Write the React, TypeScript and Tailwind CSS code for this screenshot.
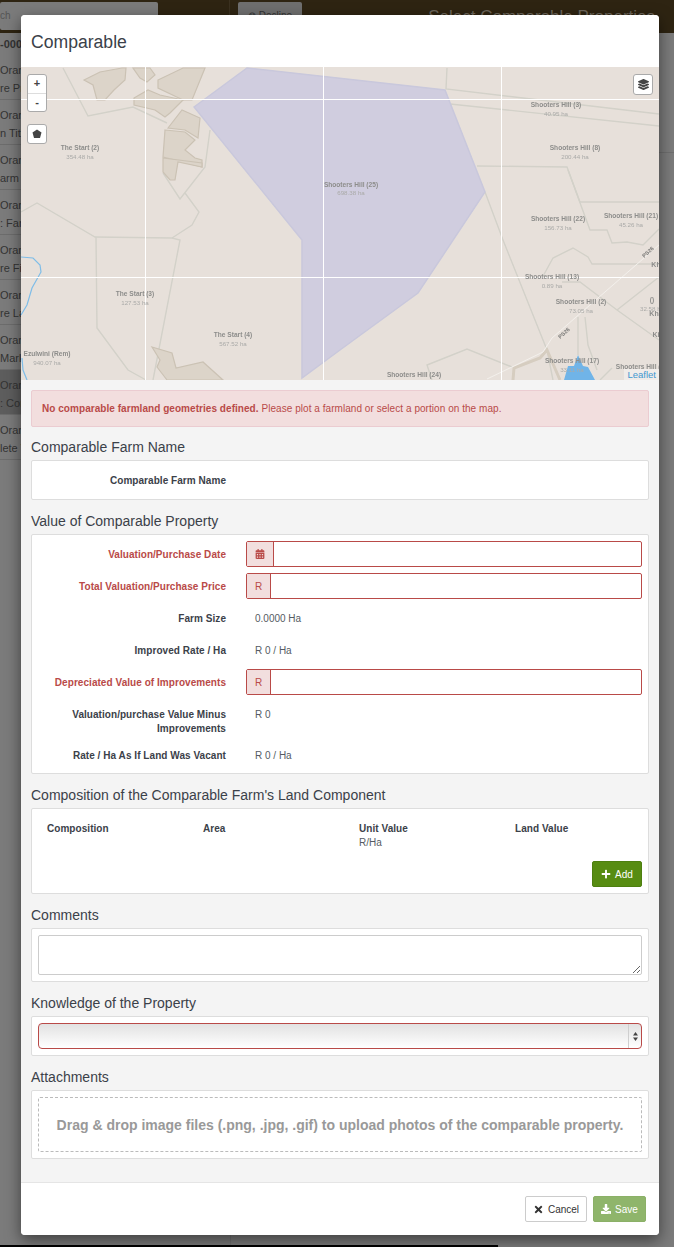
import React from "react";
import { FaCalendarAlt, FaPlus, FaTimes, FaDownload, FaLayerGroup } from "react-icons/fa";

const sideRows = [
    { second: "re Pr" },
    { second: "n Title" },
    { second: "arm I" },
    { second: ": Fan" },
    { second: "re Fi" },
    { second: "re La" },
    { second: "Marke" },
    { second: ": Con", active: true },
    { second: "lete V" },
];

// [name, x, y, area, areaY] in page coordinates
const mapLabels: [string, number, number, string, number][] = [
    ["The Start (2)", 80, 150, "354.48 ha", 159],
    ["Shooters Hill (25)", 351, 187, "698.38 ha", 195],
    ["Shooters Hill (3)", 556, 107, "40.95 ha", 116],
    ["Shooters Hill (8)", 575, 150, "200.44 ha", 159],
    ["Shooters Hill (22)", 558, 221, "156.73 ha", 230],
    ["Shooters Hill (21)", 631, 218, "45.26 ha", 227],
    ["Shooters Hill (13)", 552, 279, "0.89 ha", 288],
    ["Shooters Hill (2)", 581, 304, "73.05 ha", 313],
    ["The Start (3)", 135, 296, "127.53 ha", 305],
    ["The Start (4)", 233, 337, "567.52 ha", 346],
    ["Ezulwini (Rem)", 47, 356, "940.07 ha", 365],
    ["Shooters Hill (17)", 572, 363, "33.11 ha", 372],
    ["Shooters Hill (24)", 414, 377, "", 0],
    ["Shooters Hill (1", 640, 369, "", 0],
    ["()", 652, 302, "32.58 ha", 311],
];

const parcelLines = [
    "63,68 88,116 133,107 167,123",
    "210,130 205,167 180,199 163,173",
    "185,193 199,212 192,225 172,238",
    "21,212 37,203 95,237 172,238 180,240 153,380",
    "96,237 97,328 128,370 146,380",
    "447,68 446,89 659,114",
    "450,104 659,126",
    "477,166 567,167 580,202 659,202",
    "568,170 590,230 607,230 612,243 627,242 643,245 659,229",
    "485,192 503,240 547,350 553,380",
    "542,278 553,258 573,248 588,257 592,264 659,264",
    "562,282 580,282 617,310 659,340",
    "617,310 659,277",
    "578,317 578,355",
    "585,317 588,345 597,370",
    "432,380 427,365 467,349 512,367",
    "600,380 612,368",
];

const tanShapes = [
    "84,80 100,72 122,68 126,68 125,80 114,90 105,100 97,100 93,85",
    "133,68 150,68 155,75 147,82 140,78",
    "158,80 183,68 205,68 192,100 183,100 158,88",
    "134,98 148,90 160,95 183,100 170,113 165,117 155,110 134,105",
    "168,128 182,110 200,118 198,138 185,130",
    "165,130 185,132 195,140 185,150 195,158 202,160 202,167 175,160 163,157",
    "163,158 202,163 202,167 178,162 175,180 170,180 163,172",
    "152,347 172,353 176,368 203,362 223,380 167,380 157,367 160,360",
];

const MapView = () => (
    <svg viewBox="21 67 638 313" className="block h-[313px] w-[638px]">
        <defs>
            <filter id="soft" x="-2%" y="-2%" width="104%" height="104%">
                <feGaussianBlur stdDeviation="0.35" />
            </filter>
        </defs>
        <rect x="21" y="67" width="638" height="313" fill="#e7e0da" />
        <g filter="url(#soft)">
            {parcelLines.map((p) => (
                <polyline key={p} points={p} fill="none" stroke="#d3d1c9" strokeWidth="1.4" />
            ))}
            {tanShapes.map((p) => (
                <polygon key={p} points={p} fill="#dcd4c9" stroke="#cbc2b4" strokeWidth="1.2" />
            ))}
            {/* rivers and water */}
            <polyline points="21,257 33,258 40,265 41,272 32,288 27,305 21,315" fill="none" stroke="#7fbde8" strokeWidth="1.2" />
            <polyline points="22,358 23,370 27,380" fill="none" stroke="#7fbde8" strokeWidth="1.2" />
            <polygon points="564,380 568,366 574,366 578,355 583,366 588,367 595,380" fill="#6fb4e8" />
            {/* roads */}
            <polyline points="513,380 514,368 540,358 547,350 560,380" fill="none" stroke="#d6cdc0" strokeWidth="3" />
            <polyline points="487,379 512,367 543,352 552,338 659,245" fill="none" stroke="#f3f0ec" strokeWidth="1" />
            {/* selected farm */}
            <polygon
                points="194,107 247,68 445,90 485,192 418,293 340,350 302,378 302,240"
                fill="#d0cddf"
                stroke="#c9c8dc"
                strokeWidth="1.5"
            />
        </g>
        {/* tile seams */}
        <g stroke="#ffffff" strokeWidth="1">
            <line x1="145.5" y1="67" x2="145.5" y2="380" />
            <line x1="323.5" y1="67" x2="323.5" y2="380" />
            <line x1="501.5" y1="67" x2="501.5" y2="380" />
            <line x1="21" y1="99.5" x2="659" y2="99.5" />
            <line x1="21" y1="277.5" x2="659" y2="277.5" />
        </g>
        <g fontFamily="'Liberation Sans', Arial, sans-serif" textAnchor="middle" filter="url(#soft)">
            {mapLabels.map(([name, x, y, area, areaY]) => (
                <g key={name}>
                    <text x={x} y={y} fontSize="6.6" fontWeight="700" fill="#8d8d8b">{name}</text>
                    {area && <text x={x} y={areaY} fontSize="6.2" fill="#aaaaa8">{area}</text>}
                </g>
            ))}
            <text x="656" y="267" fontSize="7" fontWeight="700" fill="#8d8d8b">Kh</text>
            <text x="655" y="316" fontSize="7" fontWeight="700" fill="#8d8d8b">Khi</text>
            <text x="656" y="337" fontSize="7" fontWeight="700" fill="#8d8d8b">Ki</text>
            <text x="648" y="254" fontSize="5.5" fontWeight="700" fill="#777775" transform="rotate(-42 648 252)">PS26</text>
            <text x="564" y="335" fontSize="5.5" fontWeight="700" fill="#777775" transform="rotate(-42 564 333)">PS26</text>
        </g>
    </svg>
);

const Panel = ({ title, className, children }: { title: string; className?: string; children: React.ReactNode }) => (
    <section>
        <h4 className="h-[26px] pt-[5px] text-[14px] leading-[17px] text-[#3b4149]">{title}</h4>
        <div className={`rounded-[2px] border border-[#dddddd] bg-white ${className ?? ""}`}>{children}</div>
    </section>
);

const FormRow = ({ label, error, children }: { label: string; error?: boolean; children: React.ReactNode }) => (
    <div className="mb-[6px] flex">
        <label className={`w-[194px] shrink-0 pt-[7px] text-right text-[10px] leading-[14px] font-bold tracking-[0.05px] ${error ? "text-[#b94a48]" : "text-[#3b4149]"}`}>
            {label}
        </label>
        <div className="ml-[20px] flex-1">{children}</div>
    </div>
);

const StaticValue = ({ children }: { children: React.ReactNode }) => (
    <p className="pt-[7px] pb-[5px] pl-[9px] text-[10px] leading-[14px] text-[#555b63]">{children}</p>
);

const InputGroup = ({ addon, width }: { addon: React.ReactNode; width: string }) => (
    <div className="flex h-[26px] rounded-[2px] border border-[#b94a48] bg-white">
        <span className={`flex items-center justify-center border-r border-[#b94a48] bg-[#f2dede] text-[10px] text-[#b94a48] ${width}`}>{addon}</span>
        <input className="min-w-0 flex-1 outline-none" />
    </div>
);

export default function App() {
    return (
        <div className="relative h-[1247px] w-[674px] overflow-hidden bg-[#7b7b7b] font-['Liberation_Sans',Arial,sans-serif]">
            {/* Dimmed page behind the modal */}
            <header className="flex h-[33px] bg-[#2e2412]">
                <div className="w-[230px] border-r border-[#3b3120] pt-[2px]">
                    <div className="h-[28px] w-[158px] rounded-[2px] bg-[#7b7b7b] pt-[8px] text-[10px] leading-[12px] text-[#555555]">ch</div>
                </div>
                <div className="ml-[8px] pt-[2px]">
                    <div className="h-[28px] w-[64px] rounded-[2px] bg-[#6f6f6f] pt-[8px] text-center text-[10px] leading-[12px] text-[#333333]">⊗ Decline</div>
                </div>
                <div className="ml-auto pt-[6px] pr-[19px] text-[17px] leading-[22px] text-[#6d675c]">Select Comparable Properties</div>
            </header>
            <aside className="w-[21px] overflow-hidden text-[11px] leading-[14px] whitespace-nowrap text-[#333333]">
                <div className="h-[22px] pt-[4px] font-bold">-000</div>
                {sideRows.map((row) => (
                    <div key={row.second} className={`h-[45px] border-b border-[#6c6c6c] pt-[8px] ${row.active ? "bg-[#5d5d5d]" : ""}`}>
                        <p>Oran</p>
                        <p className="mt-[4px]">{row.second}</p>
                    </div>
                ))}
            </aside>
            <div className="absolute top-[33px] bottom-0 left-[230px] w-px bg-[#707070]" />
            <div className="absolute top-[152px] right-0 h-px w-[15px] bg-[#6e6e6e]" />

            {/* Modal */}
            <div className="absolute top-[15px] left-[21px] flex h-[1220px] w-[638px] flex-col overflow-hidden rounded-[4px] bg-[#f4f4f4] shadow-[0_5px_15px_rgba(0,0,0,0.5)]">
                <div className="flex h-[52px] shrink-0 items-center bg-white pt-[3px] pl-[10px] text-[17.6px] text-[#3b4149]">Comparable</div>

                {/* Map */}
                <div className="relative h-[313px] shrink-0">
                    <MapView />
                    <div className="absolute top-[7px] left-[6px] w-[20px] rounded-[3px] border border-[#aaaaaa] bg-white text-center text-[11px] leading-[17.5px] font-bold text-[#444444]">
                        <div className="border-b border-[#dddddd]">+</div>
                        <div>-</div>
                    </div>
                    <div className="absolute top-[57px] left-[6px] flex h-[20px] w-[20px] items-center justify-center rounded-[3px] border border-[#aaaaaa] bg-white">
                        <svg width="10" height="10" viewBox="0 0 10 10"><polygon points="5,0.5 9.5,3.5 8,9 2,9 0.5,3.5" fill="#444444" /></svg>
                    </div>
                    <div className="absolute top-[7px] right-[6px] flex h-[21px] w-[20px] items-center justify-center rounded-[3px] border border-[#aaaaaa] bg-white text-[11px] text-[#444444]">
                        <FaLayerGroup />
                    </div>
                    <div className="absolute right-0 bottom-0 bg-white/40 px-[3px] text-[9.5px] leading-[11px] text-[#3f97d0]">Leaflet</div>
                </div>

                {/* Form */}
                <div className="flex-1 px-[10px] pt-[10px]">
                    <div className="h-[37px] rounded-[2px] border border-[#ebccd1] bg-[#f2dede] pl-[10px] text-[10px] leading-[35px] tracking-[0.05px] text-[#b94a48]">
                        <strong>No comparable farmland geometries defined.</strong> Please plot a farmland or select a portion on the map.
                    </div>

                    <div className="mt-[7px]">
                        <Panel title="Comparable Farm Name" className="h-[40px]">
                            <div className="flex h-full items-center">
                                <span className="w-[194px] text-right text-[10px] font-bold tracking-[0.05px] text-[#3b4149]">Comparable Farm Name</span>
                            </div>
                        </Panel>
                    </div>

                    <div className="mt-[8px]">
                        <Panel title="Value of Comparable Property" className="h-[240px] pt-[6px] pr-[6px]">
                            <FormRow label="Valuation/Purchase Date" error>
                                <InputGroup addon={<FaCalendarAlt className="text-[10px]" />} width="w-[27px]" />
                            </FormRow>
                            <FormRow label="Total Valuation/Purchase Price" error>
                                <InputGroup addon="R" width="w-[24px]" />
                            </FormRow>
                            <FormRow label="Farm Size"><StaticValue>0.0000 Ha</StaticValue></FormRow>
                            <FormRow label="Improved Rate / Ha"><StaticValue>R 0 / Ha</StaticValue></FormRow>
                            <FormRow label="Depreciated Value of Improvements" error>
                                <InputGroup addon="R" width="w-[24px]" />
                            </FormRow>
                            <FormRow label="Valuation/purchase Value Minus Improvements"><StaticValue>R 0</StaticValue></FormRow>
                            <FormRow label="Rate / Ha As If Land Was Vacant"><StaticValue>R 0 / Ha</StaticValue></FormRow>
                        </Panel>
                    </div>

                    <div className="mt-[8px]">
                        <Panel title="Composition of the Comparable Farm's Land Component" className="h-[86px] pt-[13px] pr-[6px] pl-[15px]">
                            <div className="grid h-[39px] grid-cols-[156px_156px_156px_1fr] text-[10px] leading-[14px] font-bold tracking-[0.05px] text-[#3b4149]">
                                <span>Composition</span>
                                <span>Area</span>
                                <span>Unit Value<br /><span className="font-normal text-[#555b63]">R/Ha</span></span>
                                <span>Land Value</span>
                            </div>
                            <div className="flex justify-end">
                                <button className="flex h-[26px] w-[50px] items-center justify-center gap-[4px] rounded-[2px] border border-[#4d7f10] bg-[#578c12] text-[10px] text-white">
                                    <FaPlus className="text-[10px]" /> Add
                                </button>
                            </div>
                        </Panel>
                    </div>

                    <div className="mt-[8px]">
                        <Panel title="Comments" className="h-[54px] px-[6px] pt-[6px]">
                            <textarea className="block h-[40px] w-full rounded-[2px] border border-[#cccccc] bg-white outline-none" />
                        </Panel>
                    </div>

                    <div className="mt-[8px]">
                        <Panel title="Knowledge of the Property" className="h-[40px] px-[6px] pt-[6px]">
                            <div className="relative h-[26px]">
                                <select className="block h-full w-full appearance-none rounded-[4px] border border-[#b94a48] bg-gradient-to-b from-[#e2e2e2] to-white outline-none" />
                                <div className="absolute top-[1px] right-[1px] flex h-[24px] w-[13px] flex-col items-center justify-center border-l border-[#cfcfcf]">
                                    <svg width="5" height="9" viewBox="0 0 5 9" fill="#444444">
                                        <polygon points="2.5,0 5,3.4 0,3.4" />
                                        <polygon points="0,5.6 5,5.6 2.5,9" />
                                    </svg>
                                </div>
                            </div>
                        </Panel>
                    </div>

                    <div className="mt-[8px]">
                        <Panel title="Attachments" className="h-[69px] px-[6px] pt-[6px]">
                            <div className="flex h-[55px] items-center justify-center rounded-[2px] border border-dashed border-[#bbbbbb] pt-[1px] text-[14px] font-bold text-[#999999]">
                                Drag &amp; drop image files (.png, .jpg, .gif) to upload photos of the comparable property.
                            </div>
                        </Panel>
                    </div>
                </div>

                {/* Footer */}
                <footer className="flex h-[53px] shrink-0 justify-end gap-[6px] border-t border-[#e5e5e5] bg-white pt-[13px] pr-[13px]">
                    <button className="flex h-[26px] w-[62px] items-center justify-center gap-[4px] rounded-[2px] border border-[#cccccc] bg-white text-[10px] text-[#333333]">
                        <FaTimes className="text-[11px]" /> Cancel
                    </button>
                    <button className="flex h-[26px] w-[53px] items-center justify-center gap-[4px] rounded-[2px] border border-[#8bb067] bg-[#8fb56b] text-[10px] text-white">
                        <FaDownload className="text-[10px]" /> Save
                    </button>
                </footer>
            </div>

            <div className="absolute bottom-0 left-0 h-[2px] w-[498px] bg-black" />
        </div>
    );
}
